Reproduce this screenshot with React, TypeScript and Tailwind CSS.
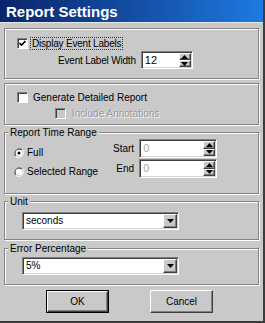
import React from 'react';

const font = "font-['Liberation_Sans',Arial,sans-serif]";

function Sunken({ className = '', children }: { className?: string; children?: React.ReactNode }) {
  return (
    <div
      className={`flex items-stretch bg-white border border-t-[#808080] border-l-[#808080] border-b-white border-r-white shadow-[inset_1px_1px_0_#404040,inset_-1px_-1px_0_#d4d4d4] ${className}`}
    >
      {children}
    </div>
  );
}

function Triangle({ down = false }: { down?: boolean }) {
  return (
    <svg width="7" height="4" viewBox="0 0 7 4">
      {down ? <path d="M0 0H7L3.5 4Z" fill="#000" /> : <path d="M0 4H7L3.5 0Z" fill="#000" />}
    </svg>
  );
}

function RaisedButton({ className = '', children }: { className?: string; children?: React.ReactNode }) {
  return (
    <div
      className={`flex items-center justify-center bg-[#c9c9c9] border border-t-white border-l-white border-b-[#404040] border-r-[#404040] shadow-[inset_-1px_-1px_0_#808080] ${className}`}
    >
      {children}
    </div>
  );
}

function Spinner({ value, disabled = false, className = '' }: { value: string; disabled?: boolean; className?: string }) {
  return (
    <Sunken className={className}>
      <span className={`flex-1 pl-[3px] leading-[16px] text-[11px] ${disabled ? 'text-[#a8a8a8]' : 'text-black'}`}>{value}</span>
      <div className="flex flex-col w-[12px] my-[1px] mr-[1px]">
        <RaisedButton className="flex-1">
          <Triangle />
        </RaisedButton>
        <RaisedButton className="flex-1">
          <Triangle down />
        </RaisedButton>
      </div>
    </Sunken>
  );
}

function Select({ value }: { value: string }) {
  return (
    <Sunken className="ml-[17px] w-[157px] h-[18px]">
      <span className="flex-1 pl-[3px] leading-[15px] text-[10px] text-black">{value}</span>
      <RaisedButton className="w-[14px] my-[1px] mr-[1px]">
        <Triangle down />
      </RaisedButton>
    </Sunken>
  );
}

function Checkbox({ checked = false, disabled = false }: { checked?: boolean; disabled?: boolean }) {
  return (
    <div
      className={`w-[11px] h-[11px] flex items-center justify-center border border-t-[#808080] border-l-[#808080] border-b-white border-r-white shadow-[inset_1px_1px_0_#404040] ${disabled ? 'bg-[#c9c9c9]' : 'bg-white'}`}
    >
      {checked && (
        <svg width="7" height="7" viewBox="0 0 7 7">
          <path d="M0.5 3L2.5 5L6.5 1" stroke="#000" strokeWidth="1.6" fill="none" />
        </svg>
      )}
    </div>
  );
}

function Radio({ checked = false }: { checked?: boolean }) {
  return (
    <svg width="10" height="10" viewBox="0 0 12 12">
      <path d="M10.2 1.8A6 6 0 0 0 1.8 10.2" stroke="#808080" strokeWidth="1" fill="none" />
      <path d="M9.5 2.5A5 5 0 0 0 2.5 9.5" stroke="#303030" strokeWidth="1" fill="none" />
      <path d="M1.8 10.2A6 6 0 0 0 10.2 1.8" stroke="#ffffff" strokeWidth="1" fill="none" />
      <circle cx="6" cy="6" r="4" fill="#ffffff" />
      {checked && <circle cx="6" cy="6" r="1.8" fill="#000" />}
    </svg>
  );
}

const etched = 'border border-[#858585] shadow-[1px_1px_0_#fafafa,inset_1px_1px_0_#fafafa]';

function Group({ legend, className = '', children }: { legend: string; className?: string; children?: React.ReactNode }) {
  return (
    <fieldset className={`${etched} ${className}`}>
      <legend className="ml-[3px] px-[2px] bg-[#c9c9c9] text-[10px] leading-[11px] text-black">{legend}</legend>
      {children}
    </fieldset>
  );
}

export default function App() {
  return (
    <div className={`${font} w-[265px] h-[323px] bg-[#c9c9c9] flex flex-col border-r-2 border-b-2 border-r-[#3c3c3c] border-b-[#3c3c3c] overflow-hidden`}>
      {/* title bar */}
      <div className="h-[22px] shrink-0 flex items-center pl-[6px] bg-gradient-to-r from-[#0a246a] to-[#1e7ae0] border-b border-[#e6e6e6] box-content">
        <span className="text-white font-bold text-[15px] leading-none">Report Settings</span>
      </div>

      <div className="flex flex-col px-[4px]">
        {/* display labels */}
        <div className={`${etched} mt-[5px] h-[51px] flex flex-col pl-[12px] pt-[9px]`}>
          <div className="flex items-center">
            <Checkbox checked />
            <span className="ml-[3px] px-[1px] outline outline-1 outline-dotted outline-[#333] text-[10px] leading-[11px] text-black tracking-[-0.2px]">
              Display Event Labels
            </span>
          </div>
          <div className="flex items-center mt-[2px] pl-[41px]">
            <span className="text-[10px] text-black tracking-[-0.2px]">Event Label Width</span>
            <Spinner value="12" className="ml-[5px] w-[52px] h-[18px]" />
          </div>
        </div>

        {/* detailed report */}
        <div className={`${etched} mt-[4px] h-[42px] flex flex-col pl-[12px] pt-[8px]`}>
          <div className="flex items-center">
            <Checkbox />
            <span className="ml-[5px] text-[10px] leading-[11px] text-black">Generate Detailed Report</span>
          </div>
          <div className="flex items-center mt-[5px] pl-[38px]">
            <Checkbox disabled />
            <span className="ml-[6px] text-[10px] leading-[11px] text-[#9a9a9a] [text-shadow:1px_1px_0_#f4f4f4]">Include Annotations</span>
          </div>
        </div>

        {/* time range */}
        <Group legend="Report Time Range" className="mt-[2px] h-[67px]">
          <div className="flex pl-[9px] pt-[1px]">
            <div className="flex flex-col gap-[8px] pt-[8px] w-[99px]">
              <div className="flex items-center">
                <Radio checked />
                <span className="ml-[3px] text-[10px] leading-[11px] text-black">Full</span>
              </div>
              <div className="flex items-center">
                <Radio />
                <span className="ml-[3px] text-[10px] leading-[11px] text-black">Selected Range</span>
              </div>
            </div>
            <div className="flex flex-col">
              <div className="flex items-center justify-end">
                <span className="mr-[5px] text-[10px] text-black">Start</span>
                <Spinner value="0" disabled className="w-[78px] h-[19px]" />
              </div>
              <div className="flex items-center justify-end mt-[1px]">
                <span className="mr-[5px] text-[10px] text-black">End</span>
                <Spinner value="0" disabled className="w-[78px] h-[19px]" />
              </div>
            </div>
          </div>
        </Group>

        {/* unit */}
        <Group legend="Unit" className="mt-[2px] h-[44px] pt-[5px]">
          <Select value="seconds" />
        </Group>

        {/* error percentage */}
        <Group legend="Error Percentage" className="mt-[3px] h-[42px] pt-[3px]">
          <Select value="5%" />
        </Group>

        {/* buttons */}
        <div className="flex mt-[5px] pl-[42px] gap-[41px]">
          <div className="w-[63px] h-[23px] border border-black">
            <RaisedButton className="w-full h-full">
              <span className="text-[10px] text-black">OK</span>
            </RaisedButton>
          </div>
          <RaisedButton className="w-[63px] h-[23px]">
            <span className="text-[10px] text-black">Cancel</span>
          </RaisedButton>
        </div>
      </div>
    </div>
  );
}
